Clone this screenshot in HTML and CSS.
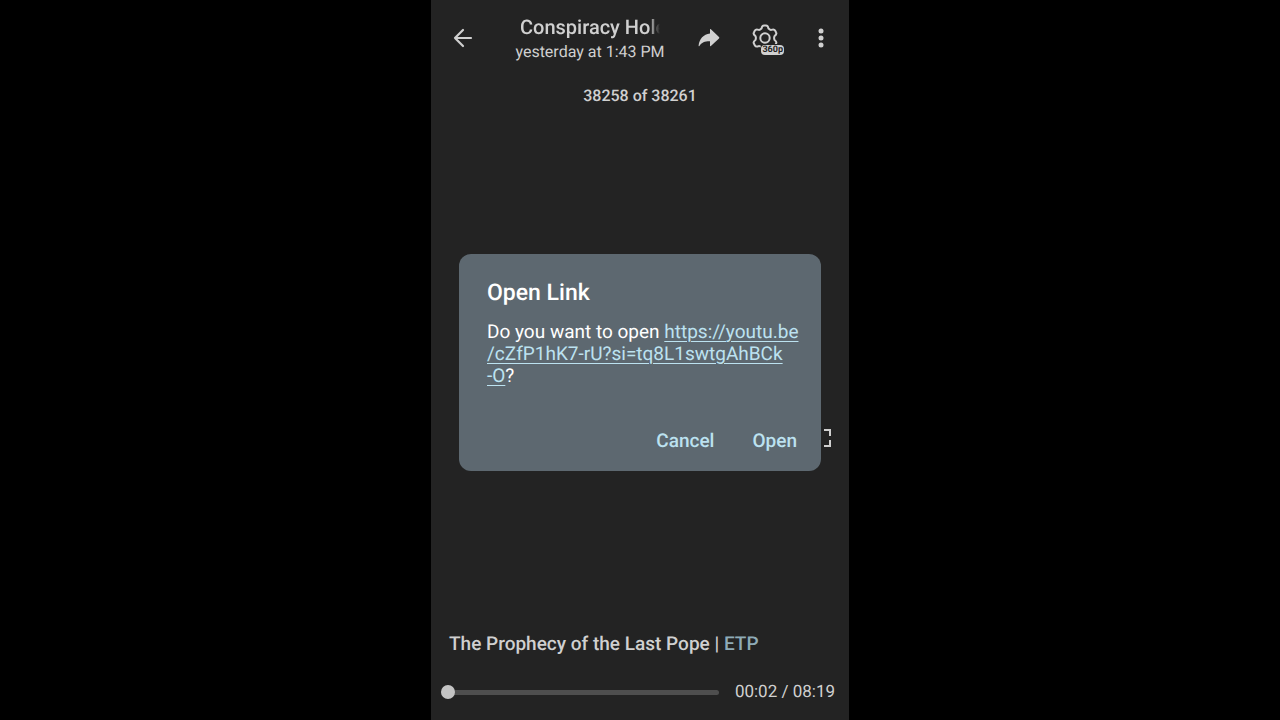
FILE: index.html
```html
<!DOCTYPE html>
<html lang="en">
<head>
<meta charset="utf-8">
<meta name="viewport" content="width=device-width, initial-scale=1">
<title>Open Link</title>
<link rel="stylesheet" href="styles.css">
</head>
<body>
<main class="player">
  <header class="topbar">
    <button class="icon-button" type="button" aria-label="Back">
      <svg width="20" height="20" viewBox="0 0 20 20" fill="none" stroke="currentColor" stroke-width="2.200" stroke-linecap="round" stroke-linejoin="round"><path d="M18 10H2M10 2L2 10L10 18"/></svg>
    </button>
    <div class="heading">
      <h1 class="title">Conspiracy Hole</h1>
      <p class="date">yesterday at 1:43 PM</p>
    </div>
    <div class="actions">
      <button class="icon-button" type="button" aria-label="Share">
        <svg width="22" height="20" viewBox="0 0 22 20" fill="currentColor"><path d="M12 1.2Q12.300 .7 12.900 1.200L21 9Q21.700 9.700 21 10.400L12.900 18Q12 18.700 12 17.600V13.200C7 13.100 3.700 14.300 1.400 17.900Q.6 18.600.6 17.500C1.400 10.800 5.400 6.300 12 5.500Z"/></svg>
      </button>
      <button class="icon-button quality" type="button" aria-label="Quality 360p">
        <svg width="28" height="28" viewBox="0 0 28 28" fill="none" stroke="currentColor" stroke-width="2" stroke-linejoin="round"><path d="M10.500 4.600Q11 1.400 13 1.400H15Q17 1.400 17.500 4.600Q19.400 6.300 20.300 5.900Q23 4.700 24.100 6.600L25.100 8.400Q26.100 10.100 23.600 12Q22.600 14 23.600 16Q26.100 17.900 25.100 19.600L24.100 21.400Q23 23.300 20.300 22.100Q19.400 21.700 17.500 23.400Q17 26.600 15 26.600H13Q11 26.600 10.500 23.400Q8.600 21.700 7.700 22.100Q5 23.300 3.900 21.400L2.900 19.600Q1.900 17.900 4.400 16Q5.400 14 4.400 12Q1.900 10.100 2.900 8.400L3.900 6.600Q5 4.700 7.700 5.900Q8.600 6.300 10.500 4.600Z"/><circle cx="14" cy="14" r="4.700"/></svg>
        <span class="badge">360p</span>
      </button>
      <button class="icon-button" type="button" aria-label="More options">
        <svg width="6" height="20" viewBox="0 0 6 20" fill="currentColor"><circle cx="3" cy="3" r="2.500"/><circle cx="3" cy="10" r="2.500"/><circle cx="3" cy="17" r="2.500"/></svg>
      </button>
    </div>
  </header>
  <p class="counter">38258 of 38261</p>
  <div class="video">
    <button class="fullscreen" type="button" aria-label="Full screen">
      <svg width="18" height="18" viewBox="0 0 18 18" fill="none" stroke="currentColor" stroke-width="2"><path d="M1 7V1H7M11 1H17V7M17 11V17H11M7 17H1V11"/></svg>
    </button>
  </div>
  <footer class="footer">
    <p class="caption">The Prophecy of the Last Pope | <a class="tag" href="#etp">ETP</a></p>
    <div class="controls">
      <input class="seek" type="range" min="0" max="499" value="0" aria-label="Seek">
      <span class="time">00:02 / 08:19</span>
    </div>
  </footer>
  <div class="overlay">
    <section class="dialog" role="dialog" aria-modal="true" aria-labelledby="dialog-title">
      <h2 class="dialog-title" id="dialog-title">Open Link</h2>
      <p class="message">Do you want to open <a class="link" href="https://youtu.be/cZfP1hK7-rU?si=tq8L1swtgAhBCk-O">https://youtu.be<br>/cZfP1hK7-rU?si=tq8L1swtgAhBCk<br>-O</a>?</p>
      <div class="buttons">
        <button class="text-button" type="button">Cancel</button>
        <button class="text-button" type="button">Open</button>
      </div>
    </section>
  </div>
</main>
</body>
</html>
```
FILE: styles.css
```css
* { box-sizing: border-box; }

body {
  margin: 0;
  background: #000;
  color: #d0d0d0;
  font-family: Roboto, "Liberation Sans", sans-serif;
  text-rendering: geometricPrecision;
  display: flex;
  justify-content: center;
}

h1, h2, p { margin: 0; }

button {
  border: 0;
  padding: 0;
  background: none;
  color: inherit;
  font: inherit;
  text-rendering: inherit;
  cursor: pointer;
}

svg { display: block; }

.player {
  position: relative;
  min-height: 100vh;
  aspect-ratio: 209 / 360;
  max-width: 100%;
  background: #232323;
  display: flex;
  flex-direction: column;
}

.topbar {
  display: flex;
  align-items: center;
  height: 76px;
  padding: 0 8px 0 12px;
}

.icon-button {
  width: 40px;
  height: 40px;
  display: grid;
  place-items: center;
}

.heading {
  flex: 1;
  min-width: 0;
  padding: 2px 0 0 8px;
  display: flex;
  flex-direction: column;
  align-items: center;
}

.title {
  width: 140px;
  overflow: hidden;
  white-space: nowrap;
  font-size: 20px;
  line-height: 26px;
  font-weight: 500;
  mask-image: linear-gradient(to right, #000 92%, transparent);
}

.date {
  font-size: 16px;
  line-height: 24px;
  white-space: nowrap;
}

.actions {
  display: flex;
  gap: 16px;
}

.quality { position: relative; }

.badge {
  position: absolute;
  right: 1px;
  bottom: 3px;
  padding: 0 1px;
  border-radius: 4px;
  background: #d0d0d0;
  color: #232323;
  box-shadow: 0 0 0 1px #232323;
  font-size: 9px;
  line-height: 10px;
  font-weight: 700;
}

.counter {
  padding-top: 8px;
  text-align: center;
  font-size: 16px;
  line-height: 24px;
  font-weight: 500;
}

.video {
  flex: 1;
  display: flex;
  justify-content: flex-end;
  align-items: flex-end;
  padding: 0 18px 185px;
}

.footer { padding: 0 14px 16px 10px; }

.caption {
  padding-left: 8px;
  font-size: 19px;
  line-height: 24px;
  font-weight: 500;
}

.tag {
  color: #8fabb7;
  text-decoration: none;
}

.controls {
  display: flex;
  align-items: center;
  gap: 16px;
  padding-top: 24px;
}

.seek {
  flex: 1;
  min-width: 0;
  height: 24px;
  margin: 0;
  appearance: none;
  background: none;
}

.seek::-webkit-slider-runnable-track {
  height: 5px;
  border-radius: 3px;
  background: #4e4e4e;
}

.seek::-webkit-slider-thumb {
  appearance: none;
  width: 14px;
  height: 14px;
  margin-top: -5px;
  border-radius: 50%;
  background: #c4c4c4;
}

.time {
  font-size: 17px;
  line-height: 24px;
}

.overlay {
  position: absolute;
  inset: 0;
  display: grid;
  grid-template-columns: minmax(0, 1fr);
  align-items: center;
  padding: 4px 28px 0;
}

.dialog {
  padding: 24px 24px 12px 28px;
  border-radius: 12px;
  background: #5d6870;
  color: #fff;
}

.dialog-title {
  font-size: 23px;
  line-height: 30px;
  font-weight: 500;
}

.message {
  padding-top: 13px;
  font-size: 19px;
  line-height: 22px;
  white-space: nowrap;
}

.link {
  color: #bce2f0;
  text-decoration-thickness: 1px;
  text-underline-offset: 3px;
}

.buttons {
  display: flex;
  justify-content: flex-end;
  gap: 38px;
  padding-top: 36px;
}

.text-button {
  color: #bce2f0;
  font-size: 19px;
  line-height: 36px;
  font-weight: 500;
}
```
